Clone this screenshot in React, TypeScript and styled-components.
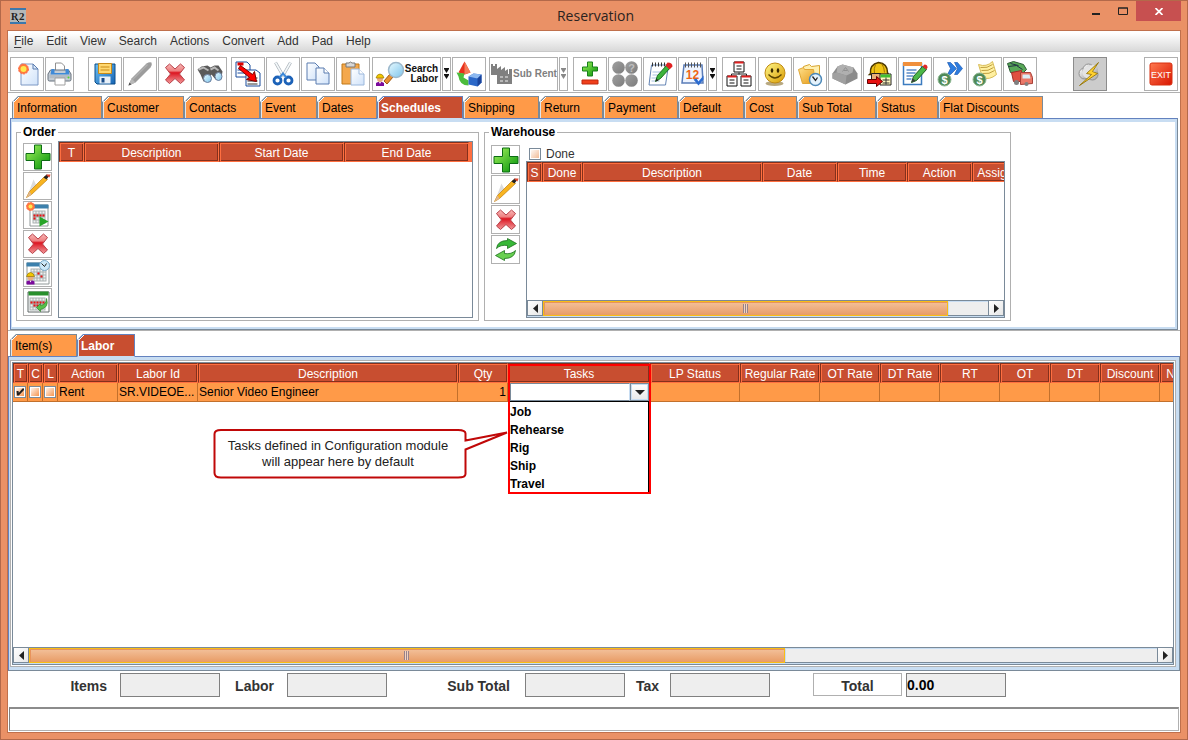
import React from "react";
import styled, { createGlobalStyle, css } from "styled-components";

const c = {
  frame: "#ea9166",
  frameEdge: "#b3694a",
  orange: "#ff9a48",
  brick: "#c84e30",
  brickDark: "#85301c",
  brickLight: "#ff6f40",
  steel: "#7a8a99",
  blue: "#6382bf",
  ice: "#c8ddf2",
  grey: "#b0b0b0",
  field: "#eeeeee",
};

const Global = createGlobalStyle`
  * { box-sizing: border-box; }
  body { margin: 0; background: ${c.frame}; font: 12px/14px "Liberation Sans", Arial, sans-serif; color: #000; }
  button, input, select { font: inherit; color: inherit; margin: 0; padding: 0; border-radius: 0; }
  svg { flex: none; }
`;

/* ---------- window frame ---------- */

const Window = styled.div`
  min-height: 100vh;
  display: flex;
  flex-direction: column;
  border: 1px solid ${c.frameEdge};
  padding: 0 6px 6px;
  background: ${c.frame};
`;
const TitleBar = styled.header`
  height: 29px;
  display: grid;
  grid-template-columns: 1fr auto 1fr;
  align-items: center;
  padding-left: 3px;
`;
const Title = styled.h1`
  margin: 0;
  font: 14px/18px "Open Sans", sans-serif;
  color: #2b2320;
`;
const WindowButtons = styled.div`
  display: flex;
  align-self: start;
  justify-content: flex-end;
`;
const WindowButton = styled.button<{ $close?: boolean }>`
  width: ${(p) => (p.$close ? 45 : 27)}px;
  height: 20px;
  border: 0;
  display: grid;
  place-items: center;
  background: ${(p) => (p.$close ? "#c75050" : "transparent")};
`;
const Client = styled.main`
  flex: 1;
  min-width: 0;
  display: flex;
  flex-direction: column;
  border: 1px solid #c0704c;
  background: #fff;
`;

/* ---------- menu and toolbar ---------- */

const MenuBar = styled.nav`
  height: 21px;
  display: flex;
  align-items: center;
  gap: 13px;
  padding-left: 6px;
  border-bottom: 1px solid #c8c8c8;
  background: linear-gradient(#fff 10%, #d9d9d9);
`;
const MenuItem = styled.button`
  border: 0;
  background: none;
  color: #333;
  u { text-underline-offset: 2px; }
`;
const Toolbar = styled.div`
  display: flex;
  padding: 5px 2px 1px;
  border-bottom: 1px solid ${c.grey};
`;
const ToolGroup = styled.div<{ $before?: number }>`
  display: flex;
  gap: 1px;
  margin-left: ${(p) => p.$before ?? 0}px;
`;
const ToolSpacer = styled.div`
  flex: 1;
`;
const ToolButton = styled.button<{ $w?: number; $h?: number; $pressed?: boolean }>`
  width: ${(p) => p.$w ?? 34}px;
  height: ${(p) => p.$h ?? 34}px;
  flex: none;
  display: flex;
  align-items: center;
  justify-content: center;
  border: 1px solid ${(p) => (p.$pressed ? "#8c8c8c" : c.grey)};
  background: ${(p) => (p.$pressed ? "#cccccc" : "#fff")};
  overflow: hidden;
`;
const ToolText = styled.span<{ $dim?: boolean }>`
  font-weight: bold;
  font-size: 10px;
  line-height: 10px;
  text-align: right;
  white-space: nowrap;
  color: ${(p) => (p.$dim ? "#808080" : "#111")};
`;

/* ---------- tabs and panels ---------- */

const TabRow = styled.div<{ $left: number }>`
  display: flex;
  align-items: flex-start;
  height: 22px;
  padding-left: ${(p) => p.$left}px;
`;
const TabButton = styled.button<{ $w: number; $on?: boolean }>`
  width: ${(p) => p.$w}px;
  height: 22px;
  flex: none;
  position: relative;
  text-align: left;
  padding: 1px 0 0 4px;
  border: 1px solid ${c.steel};
  border-bottom: 0;
  clip-path: polygon(6px 0, 100% 0, 100% 100%, 0 100%, 0 6px);
  background: linear-gradient(135deg, ${c.steel} 5px, #fff 5px 6px, ${c.orange} 6px) border-box;
  box-shadow: inset 1px 0 #dfe6ee;
  ${(p) =>
    p.$on &&
    css`
      height: 23px;
      z-index: 1;
      color: #fff;
      font-weight: bold;
      padding-left: 3px;
      border-color: ${c.blue};
      border-bottom: 1px solid ${c.ice};
      background: linear-gradient(135deg, ${c.blue} 5px, #fff 5px 6px, ${c.brick} 6px) border-box;
    `}
`;
const UpperArea = styled.section`
  padding: 3px 2px 0;
  border-bottom: 1px solid ${c.grey};
`;
const UpperPanel = styled.div`
  display: flex;
  gap: 5px;
  padding: 6px 4px 8px 5px;
  border: 1px solid;
  border-color: ${c.blue} ${c.steel} ${c.steel} ${c.blue};
  box-shadow: inset 1px 3px ${c.ice}, inset -2px -2px ${c.ice};
`;
const LowerArea = styled.section`
  flex: 1;
  min-width: 0;
  display: flex;
  flex-direction: column;
  padding-top: 3px;
`;
const LowerPanel = styled.div`
  flex: 1;
  display: flex;
  padding: 3px 3px 3px 1px;
  border: 1px solid;
  border-color: ${c.blue} ${c.steel} ${c.steel} ${c.blue};
  background: ${c.ice};
`;
const LowerInner = styled.div`
  flex: 1;
  min-width: 0;
  display: flex;
  padding: 1px;
  border: 1px solid ${c.grey};
  background: #fff;
`;
const Group = styled.fieldset<{ $w: number }>`
  width: ${(p) => p.$w}px;
  height: 196px;
  min-width: 0;
  margin: 0;
  padding: 0 5px 2px 6px;
  border: 1px solid ${c.grey};
`;
const Legend = styled.legend`
  margin-left: -2px;
  padding: 0 2px;
  font-weight: bold;
  line-height: 14px;
`;
const GroupBody = styled.div`
  display: flex;
  height: 100%;
  gap: 6px;
`;
const SideTools = styled.div<{ $top: number }>`
  display: flex;
  flex-direction: column;
  gap: 1px;
  padding-top: ${(p) => p.$top}px;
`;
const GroupMain = styled.div<{ $top: number }>`
  flex: 1;
  min-width: 0;
  display: flex;
  flex-direction: column;
  padding-top: ${(p) => p.$top}px;
`;
const CheckLabel = styled.label`
  display: flex;
  align-items: center;
  gap: 5px;
  height: 14px;
  padding-left: 3px;
  color: #333;
`;

/* ---------- tables ---------- */

const TableFrame = styled.div`
  flex: 1;
  min-width: 0;
  display: flex;
  flex-direction: column;
  border: 1px solid ${c.steel};
  background: #fff;
`;
const TableView = styled.div`
  flex: 1;
  overflow: hidden;
  background: linear-gradient(${c.brickLight} 20px, transparent 20px);
`;
const Table = styled.table<{ $w: number }>`
  width: ${(p) => p.$w}px;
  table-layout: fixed;
  border-collapse: separate;
  border-spacing: 0;
`;
const Th = styled.th`
  height: 20px;
  padding: 2px 0 0;
  line-height: 14px;
  overflow: hidden;
  white-space: nowrap;
  font-weight: normal;
  color: #fff;
  background: ${c.brick};
  border: 1px solid;
  border-color: ${c.brickDark} ${c.brickLight} ${c.brickLight} ${c.brickDark};
  box-shadow: inset 1px 1px ${c.brickLight}, inset -1px -1px ${c.brickDark};
`;
const Td = styled.td<{ $right?: boolean }>`
  height: 19px;
  padding: 0 1px;
  white-space: nowrap;
  vertical-align: middle;
  text-align: ${(p) => (p.$right ? "right" : "left")};
  background: ${c.orange};
  border: solid #c2702c;
  border-width: 0 1px 1px 0;
`;
const TaskTd = styled(Td)`
  position: relative;
  padding: 0 0 0 2px;
`;
const Check = styled.input.attrs({ type: "checkbox" })<{ $warm?: boolean }>`
  appearance: none;
  display: block;
  width: 12px;
  height: 12px;
  border: 1px solid ${c.steel};
  box-shadow: inset 1px 1px #fff, inset -1px -1px #fff;
  background: linear-gradient(135deg, #fff, ${(p) => (p.$warm ? "#f58a3c" : "#f0b48c")});
  &:checked::before {
    content: "";
    display: block;
    width: 10px;
    height: 10px;
    background: #222;
    clip-path: polygon(15% 40%, 35% 40%, 38% 58%, 75% 15%, 90% 15%, 90% 30%, 38% 85%, 20% 85%);
  }
`;

/* ---------- task editor ---------- */

const Combo = styled.div`
  display: flex;
  height: 18px;
`;
const ComboSelect = styled.select`
  appearance: none;
  flex: 1;
  min-width: 0;
  height: 18px;
  border: 1px solid ${c.steel};
  border-right-color: ${c.ice};
  background: #fff;
`;
const ComboArrow = styled.span`
  width: 19px;
  height: 18px;
  display: grid;
  place-items: center;
  border: 1px solid ${c.steel};
  box-shadow: inset 0 0 0 1px ${c.ice};
  background: linear-gradient(#fff, #e8e8e8);
`;
const TaskList = styled.ul`
  position: absolute;
  top: 18px;
  left: 2px;
  right: 0;
  height: 92px;
  margin: 0;
  padding: 1px 0 0;
  list-style: none;
  font-weight: bold;
  line-height: 18px;
  background: #fff;
  border: 1px solid #000;
  border-width: 1px 1px 0 0;
`;
const Highlight = styled.div`
  position: absolute;
  top: -19px;
  left: 0;
  right: -2px;
  height: 130px;
  border: 2px solid #f00;
  pointer-events: none;
`;
const Callout = styled.div`
  position: absolute;
  left: -295px;
  top: 45px;
  width: 296px;
  height: 52px;
`;
const CalloutShape = styled.svg`
  position: absolute;
  inset: 0;
  overflow: visible;
`;
const CalloutText = styled.p`
  position: relative;
  width: 250px;
  margin: 0;
  padding-top: 10px;
  font-size: 13px;
  line-height: 16px;
  text-align: center;
  color: #222;
`;

/* ---------- scroll bar ---------- */

const Scroll = styled.div`
  display: flex;
  flex: none;
  height: 17px;
  border-top: 1px solid ${c.steel};
  border-bottom: 1px solid ${c.ice};
  background: ${c.field};
`;
const ScrollEnd = styled.button`
  width: 16px;
  display: grid;
  place-items: center;
  border: 1px solid ${c.steel};
  border-width: 0 1px 1px;
  background: linear-gradient(135deg, #fff, #e6e6e6);
`;
const Thumb = styled.div<{ $grow: number }>`
  flex: ${(p) => p.$grow} 0 0;
  display: grid;
  place-items: center;
  border: 1px solid #f9bd14;
  box-shadow: inset 1px 1px #e8935c;
  background: linear-gradient(#f3c19b, #e89c66);
`;
const Grip = styled.i`
  width: 5px;
  height: 9px;
  background: repeating-linear-gradient(90deg, #98828a 0 1px, #f3d4bf 1px 2px);
`;
const Track = styled.div<{ $grow: number }>`
  flex: ${(p) => p.$grow} 0 0;
  border-bottom: 1px solid ${c.steel};
  box-shadow: inset 1px 1px ${c.ice};
`;

/* ---------- footer ---------- */

const Totals = styled.form`
  height: 36px;
  display: flex;
  align-items: flex-start;
  padding-top: 2px;
  font-weight: bold;
  font-size: 14px;
  line-height: 24px;
  color: #333;
`;
const TotalLabel = styled.label<{ $w: number; $gap: number }>`
  width: ${(p) => p.$w}px;
  padding-top: 1px;
  padding-right: ${(p) => p.$gap}px;
  text-align: right;
  white-space: nowrap;
`;
const TotalField = styled.input`
  width: 100px;
  height: 24px;
  padding: 0;
  color: #000;
  border: 1px solid #808080;
  background: ${c.field};
`;
const TotalButton = styled.button`
  width: 89px;
  height: 23px;
  margin: 0 4px 0 43px;
  border: 1px solid ${c.grey};
  background: #fff;
`;
const StatusBar = styled.footer`
  height: 24px;
  margin: 0 1px 1px;
  border: 1px solid ${c.grey};
  border-top: 2px solid #8c8c8c;
  border-left-color: #808080;
`;

/* ---------- icons ---------- */

const HiddenDefs = styled.svg`
  position: absolute;
  width: 0;
  height: 0;
`;

const Grad = ({ id, a, b }: { id: string; a: string; b: string }) => (
  <linearGradient id={id} x1="0" y1="0" x2="1" y2="1">
    <stop offset="0" stopColor={a} />
    <stop offset="1" stopColor={b} />
  </linearGradient>
);

const Defs = () => (
  <HiddenDefs aria-hidden>
    <defs>
      <Grad id="paper" a="#ffffff" b="#cfe2fa" />
      <Grad id="green" a="#a4f45c" b="#009008" />
      <linearGradient id="red" x1="0" y1="0" x2="0" y2="1">
        <stop offset="0" stopColor="#f8b8b8" />
        <stop offset=".35" stopColor="#ee8080" />
        <stop offset=".45" stopColor="#dc1420" />
        <stop offset=".65" stopColor="#e44850" />
        <stop offset="1" stopColor="#f29a9a" />
      </linearGradient>
      <Grad id="blueg" a="#6cc0f4" b="#1664b4" />
      <Grad id="gold" a="#ffe08a" b="#e69a18" />
      <Grad id="silver" a="#ffffff" b="#a0a0a0" />
      <Grad id="smile" a="#fff88a" b="#d89a00" />
      <Grad id="exit" a="#ff7a50" b="#d81400" />
      <Grad id="glass" a="#e8faff" b="#7cc4ec" />
      <Grad id="ball" a="#a0a0a0" b="#7c7c7c" />
    </defs>
  </HiddenDefs>
);

const Sun = ({ x, y, r = 4 }: { x: number; y: number; r?: number }) => (
  <g>
    <circle cx={x} cy={y} r={r} fill="#ff7a3c" stroke="#ff6a4c" strokeDasharray="2 1" />
    <circle cx={x} cy={y} r={r - 2} fill="#ffe850" />
  </g>
);
const Worker = ({ x, y }: { x: number; y: number }) => (
  <g transform={`translate(${x} ${y})`}>
    <path d="M0 12V9q4-3 8 0v3z" fill="#7a0a9c" />
    <path d="M3 8l1 2 1-2z" fill="#fff" />
    <circle cx="4" cy="5" r="3" fill="#e8b080" />
    <path d="M0 4Q1 0 4 0t4 4z" fill="#f2c800" stroke="#8a6a00" strokeWidth=".6" />
  </g>
);
const Dots = ({ x, y, cols, rows, hot }: { x: number; y: number; cols: number; rows: number; hot: number[] }) => (
  <g>
    <path d={`M${x - 1} ${y - 1}h${cols * 3 + 1}v${rows * 3 + 1}h-${cols * 3 + 1}z`} fill="#a8b0b0" />
    {Array.from({ length: cols * rows }, (_, i) => (
      <rect
        key={i}
        x={x + (i % cols) * 3}
        y={y + Math.floor(i / cols) * 3}
        width="2"
        height="2"
        fill={hot.includes(i) ? "#f01010" : "#eef0f0"}
      />
    ))}
  </g>
);
const Coin = ({ x, y }: { x: number; y: number }) => (
  <g>
    <circle cx={x} cy={y} r="6.5" fill="#4f8a58" stroke="#8fb894" />
    <text x={x} y={y + 4} fontSize="11" fontWeight="bold" fill="#fff" textAnchor="middle" fontFamily="Liberation Sans">
      $
    </text>
  </g>
);

const art: Record<string, React.ReactNode> = {
  newDoc: (
    <>
      <path d="M6.500 2.500h12l5 5v16h-17z" fill="url(#paper)" stroke="#7c98c4" />
      <path d="M18.500 2.500v5h5z" fill="#dceafa" stroke="#5a7cb0" />
      <Sun x={9} y={7.5} r={5} />
    </>
  ),
  print: (
    <>
      <path d="M8 10V1.500h6l3 3V10z" fill="#fff" stroke="#909090" />
      <path d="M3 8.500h18l2.500 4V18q0 1.500-1.500 1.500H2Q.5 19.500.5 18v-5.500z" fill="#c4ccd4" stroke="#66707c" />
      <path d="M4 7.500h3v4h11v-4h3l1 5.500H3z" fill="#3f8ad8" />
      <path d="M2 13.500h20v3H2z" fill="#b4bcc4" />
      <circle cx="21" cy="16" r="1" fill="#50d830" />
      <path d="M7.500 16.500h10v7h-10z" fill="#fff" stroke="#a0a0a0" />
    </>
  ),
  save: (
    <>
      <path d="M2.500 2.500h20v20h-18l-2-2z" fill="url(#blueg)" stroke="#0a4c88" />
      <path d="M6 2h13v10H6z" fill="#ffd870" stroke="#c88a18" />
      <path d="M8 5.500h9M8 8.500h9" stroke="#c88a18" />
      <path d="M7 15h11v7H7z" fill="#e8f0f8" />
      <path d="M9 16.500h3v4.500H9z" fill="#1a4c88" />
    </>
  ),
  penGrey: (
    <>
      <path d="M1 24l3-7L19 2q3-2 5-1 1 2-1 5L8 21z" fill="#9c9c9c" />
      <path d="M1 24l3-7 4 4z" fill="#b8b8b8" />
      <path d="M1 24l1-3 2 2z" fill="#505050" />
      <path d="M5 18L20 3" stroke="#b0b0b0" strokeWidth="1.500" />
    </>
  ),
  cross: (
    <path
      d="M3 6l4-3.500 5.500 5 5.500-5L22 6l-5 6.500 5 6-4 3.500-5.500-5L7 22l-4-3.500 5-6z"
      fill="url(#red)"
      stroke="#b84048"
      strokeLinejoin="round"
    />
  ),
  binoculars: (
    <>
      <path d="M0 8l4-3 6-1 3 2 4-2h4l4 6-1 6-6 2-4-5-3 6-5 1-3-7z" fill="#5a5a5a" />
      <path d="M1 8l5-2 5 3M13 8l4-2 4 3" stroke="#b8b8b8" strokeWidth="2" fill="none" />
      <ellipse cx="10" cy="17" rx="4" ry="4" fill="url(#glass)" stroke="#6a7c9c" />
      <ellipse cx="21" cy="15" rx="3.500" ry="4" fill="url(#glass)" stroke="#6a7c9c" />
    </>
  ),
  convert: (
    <>
      <path d="M.5.500h11l3 3v12H.500z" fill="#fff" stroke="#1a4c9c" />
      <path d="M2 1h6v3H2z" fill="#e00000" />
      <path d="M2 8.500h8M2 11.500h8" stroke="#1a4c9c" />
      <path d="M10.500 8.500h10l4 3v13h-14z" fill="#fff" stroke="#1a4c9c" />
      <path d="M12 16.500h10M12 19.500h10M12 22.500h10" stroke="#333" />
      <path d="M5 4l12 9 2-3 2 10-10-2 3-2L3 7z" fill="#f00" stroke="#700" />
    </>
  ),
  cut: (
    <>
      <path d="M5 1l8 14M20 1l-8 14" stroke="#a8b0b8" strokeWidth="3" />
      <path d="M5 1l8 14M20 1l-8 14" stroke="#f4f8fa" strokeWidth="1.600" />
      <circle cx="7" cy="19" r="3.500" fill="none" stroke="#1c62b8" strokeWidth="2.800" />
      <circle cx="18" cy="19" r="3.500" fill="none" stroke="#1c62b8" strokeWidth="2.800" />
      <path d="M9 16l3.500-4 3.500 4" fill="none" stroke="#3c88d8" strokeWidth="2" />
    </>
  ),
  copy: (
    <>
      <path d="M1.500 1.500h8l4 4v13h-12z" fill="url(#paper)" stroke="#5a7cb0" />
      <path d="M10.500 6.500h8l5 5v11h-13z" fill="url(#paper)" stroke="#5a7cb0" />
      <path d="M18.500 6.500v5h5" fill="#fff" stroke="#5a7cb0" />
    </>
  ),
  paste: (
    <>
      <path d="M1.500 2.500h17v20h-17z" fill="#f4a84c" stroke="#c07818" />
      <path d="M5.500 1.500h3l1.500-1 1.500 1h3v4h-9z" fill="#d8d8d8" stroke="#787878" />
      <path d="M10.500 7.500h8l5 5v11h-13z" fill="url(#paper)" stroke="#9cb8dc" />
      <path d="M18.500 7.500v5h5" fill="#fff" stroke="#9cb8dc" />
    </>
  ),
  searchLabor: (
    <>
      <path d="M9 20l6-7 3 3-6 7z" fill="#e89030" stroke="#a05a10" />
      <circle cx="21" cy="9" r="7.500" fill="url(#glass)" stroke="#9cb8cc" strokeWidth="1.500" />
      <Worker x={1} y={13} />
    </>
  ),
  shapes: (
    <>
      <path d="M8 0L2 11l6 2 6-2z" fill="#e8301c" />
      <path d="M8 0v13l6-2z" fill="#f47a58" />
      <path d="M0 11l8 1-1 4 5 3v5q-9 0-10-9z" fill="#4cbc3c" />
      <path d="M12 15l5-3 8 1v8l-4 4-9-2z" fill="#2c68c8" />
      <path d="M12 15l5-3 8 1-4 4z" fill="#8cb8f0" />
      <path d="M21 17l4-4v8l-4 4z" fill="#1a449c" />
    </>
  ),
  factory: (
    <>
      <path d="M1 14V3h2v2h2V3h2v5l4-3v4l4-3v4l3-2v5h1V8h3v15H7v-9z" fill="#808080" />
      <path d="M10 15h3v2h-3zM15 15h3v2h-3zM10 19h3v2h-3zM15 19h3v2h-3z" fill="#b8b8b8" />
    </>
  ),
  plusMinus: (
    <>
      <path d="M10 .500h5v5h5v4h-5v5h-5v-5H5v-4h5z" fill="url(#green)" stroke="#18801c" />
      <path d="M4.500 18.500h16v4h-16z" fill="#f0401c" stroke="#c02810" />
    </>
  ),
  circles: (
    <>
      {[6, 19].map((x) =>
        [6, 19].map((y) => <circle key={`${x}-${y}`} cx={x} cy={y} r="6.300" fill="url(#ball)" />)
      )}
      <text x="19" y="10" fontSize="11" fontWeight="bold" fill="#bdbdbd" textAnchor="middle">
        ?
      </text>
    </>
  ),
  note: (
    <>
      <path d="M4 3.500h17l-3 20H1.500z" fill="#fff" stroke="#6484b4" />
      <path d="M5 1v4M8 1v4M11 1v4M14 1v4M17 1v4" stroke="#333" />
      <path d="M5 10.500h10M5 13.500h9M4 16.500h8M4 19.500h8" stroke="#a8c0e0" />
      <path d="M8 20l2-6 9-10 3 3-9 10z" fill="#3cb43c" stroke="#1a701c" />
      <path d="M18 4l2-3q5 0 5 4l-3 3z" fill="#e02020" />
      <path d="M8 20l1-3 2 2z" fill="#222" />
    </>
  ),
  calendar: (
    <>
      <path d="M3.500 3.500h18l1 18h-21z" fill="#eef4ff" stroke="#5a7cb8" strokeWidth="1.500" />
      <path d="M5 1v5M8 1v5M11 1v5M14 1v5M17 1v5M20 1v5" stroke="#555" />
      <text x="12" y="17" fontSize="12" fontWeight="bold" fill="#f06414" textAnchor="middle" fontFamily="Liberation Sans">
        12
      </text>
      <path d="M13 18l3-1 2 3 5-6v4l-5 6z" fill="#2c6cd0" />
    </>
  ),
  org: (
    <>
      <path d="M12.500 11v2M5 15v-2.500h15V15" stroke="#222" fill="none" />
      {[
        [8, 0],
        [1, 14],
        [15, 14],
      ].map(([x, y]) => (
        <g key={`${x}${y}`}>
          <path d={`M${x - 0.5} ${y + 0.5}h10v10h-10z`} fill="#fff" stroke="#111" />
          <path d={`M${x} ${y}h9v2h-9z`} fill="#e02020" />
          <path d={`M${x + 2} ${y + 4.5}h5M${x + 2} ${y + 7.5}h5`} stroke="#111" />
        </g>
      ))}
    </>
  ),
  smile: (
    <>
      <ellipse cx="12" cy="22" rx="9" ry="2.500" fill="#b8a880" />
      <circle cx="12.500" cy="11.500" r="10" fill="url(#smile)" stroke="#c08a10" />
      <ellipse cx="9.500" cy="9" rx="1.300" ry="2.300" fill="#3c2c00" />
      <ellipse cx="15.500" cy="9" rx="1.300" ry="2.300" fill="#3c2c00" />
      <path d="M6 13q6.500 7 13 0" fill="none" stroke="#5c4400" strokeWidth="1.300" />
    </>
  ),
  folderClock: (
    <>
      <path d="M6 5l6-2 2 2 8-1v15H6z" fill="#fff0b0" stroke="#d8a430" />
      <path d="M1 8l5-2 1 2h9l2 14H5z" fill="url(#gold)" stroke="#e0a838" />
      <circle cx="18" cy="18" r="6" fill="#e4f2fc" stroke="#4c88b8" strokeWidth="1.500" />
      <path d="M15 15l3 4 2-3" fill="none" stroke="#222" strokeWidth="1.300" />
    </>
  ),
  keycap: (
    <>
      <path d="M0 12L5 5l5-2 11 3 4 6v5l-12 6L0 17z" fill="#8c8c8c" />
      <path d="M5 5l5-2 11 3-1 5-6 3-10-3z" fill="#b0b0b0" />
      <path d="M0 12l4-1 10 3-1 9L0 17z" fill="#a0a0a0" />
      <path d="M10 10l3-4 3 4M11.500 9h3" stroke="#909090" fill="none" />
    </>
  ),
  labor: (
    <>
      <path d="M3 12Q2 3 11 1q9 1 9 10l1 2H2z" fill="#f0c414" stroke="#4c3800" strokeWidth="1.500" />
      <path d="M8 3q-2 4-1 9M14 2q3 4 3 9" stroke="#a07800" fill="none" />
      <path d="M4 12h9v7H4z" fill="#e8b078" stroke="#222" />
      <path d="M12.500 12.500h11v11h-11z" fill="#fff8c0" stroke="#222" />
      <path d="M13 13h10v3H13z" fill="#40c030" />
      <path d="M15 18.500h7M15 21.500h7M18.500 16v7" stroke="#333" />
      <path d="M0 18h9v-3l6 5-6 5v-3H0z" fill="#e81010" stroke="#600" />
    </>
  ),
  edit: (
    <>
      <path d="M1 2h18v21H1z" fill="#fff" stroke="#3c7cc0" strokeWidth="1.500" />
      <path d="M.5.500h19v4H.500z" fill="#f0903c" />
      <path d="M4 8.500h10M4 11.500h9M4 14.500h7M4 17.500h5" stroke="#5c8cc8" strokeWidth="1.300" />
      <path d="M9 21l2-6L20 5l4 3-10 11z" fill="#4cb848" stroke="#205c20" />
      <path d="M20 5l2-2q3 0 3 3l-1 2z" fill="#e02828" />
      <path d="M9 21l1-4 3 2z" fill="#3c3c3c" />
    </>
  ),
  coinNext: (
    <>
      <path d="M10 1h3l6 6-6 6h-3l3-6zM17 1h3l5 6-5 6h-3l3-6z" fill="#2c7ce0" stroke="#1450a8" strokeWidth=".6" />
      <Coin x={7} y={18} />
    </>
  ),
  coinNote: (
    <>
      <path d="M6 3q8 3 14-3l4 13q-7 6-14 3z" fill="#fff0a0" stroke="#d8bc58" />
      <path d="M8 6q7 1 12-3M9 9q7 1 12-3M10 12q7 1 12-3" stroke="#c0a040" fill="none" />
      <Coin x={7} y={18} />
    </>
  ),
  truck: (
    <>
      <path d="M0 2l6-2 10 3 3 5-3 3H3z" fill="#58a858" stroke="#2c5c34" />
      <path d="M1 5l8-1 6 4M3 2l8 2" stroke="#234" fill="none" />
      <path d="M4 11l10-2v11L6 20z" fill="#e05040" stroke="#a03028" />
      <path d="M13 11h10l2 5v6l-12 1z" fill="#ea7868" stroke="#a84038" />
      <path d="M15 13h7l1 4h-8z" fill="#dcecf4" />
      <circle cx="9" cy="21" r="2.500" fill="#808080" />
      <circle cx="19" cy="22.500" r="2" fill="#808080" />
    </>
  ),
  storm: (
    <>
      <circle cx="7" cy="12" r="5.500" fill="url(#silver)" stroke="#909090" />
      <circle cx="15" cy="13" r="5.500" fill="url(#silver)" stroke="#909090" />
      <circle cx="11" cy="8" r="5.500" fill="url(#silver)" stroke="#909090" />
      <circle cx="16" cy="8" r="4.500" fill="url(#silver)" />
      <circle cx="11" cy="11" r="6" fill="#e4e4e4" />
      <path d="M21 1L9 12l5 1L2 24l18-12-5-2z" fill="#ffd030" stroke="#8a6c00" strokeWidth=".8" />
    </>
  ),
  exit: (
    <>
      <rect x="1.500" y="1.500" width="22" height="22" rx="2" fill="url(#exit)" stroke="#d83010" />
      <text x="12.500" y="16" fontSize="9" fill="#fff" textAnchor="middle" fontFamily="Liberation Sans">
        EXIT
      </text>
    </>
  ),
  plus: <path d="M9 .500h7v8.500h8.500v7H16v8.500H9V16H.500V9H9z" fill="url(#green)" stroke="#0c6c14" />,
  pencil: (
    <>
      <path d="M2 22L8 6l3 6z" fill="#dcdcdc" />
      <path d="M1 24l3-6L19 3l3 3L6 21z" fill="#f8b420" stroke="#c08010" strokeWidth=".7" />
      <path d="M1 24l3-6 2 3z" fill="#e0b890" />
      <path d="M18 4l3-3 3 1-3 4z" fill="#222" />
      <path d="M21 1l4 0-1 3-3-2z" fill="#e04830" />
    </>
  ),
  calNew: (
    <>
      <path d="M4.500 2.500h18v21h-18z" fill="#fff" stroke="#909898" />
      <path d="M5 2h18v4H5z" fill="#3c80ac" />
      <Dots x={8} y={9} cols={4} rows={4} hot={[4, 5, 6, 7, 8]} />
      <path d="M14 14l9 5-9 5z" fill="#28a428" />
      <Sun x={5} y={4} r={4} />
    </>
  ),
  calLabor: (
    <>
      <path d="M1.500 2.500h22v21h-22z" fill="#fff" stroke="#909898" />
      <path d="M1 2h18v4H1z" fill="#3c80ac" />
      <Dots x={6} y={9} cols={5} rows={4} hot={[7, 13]} />
      <circle cx="19" cy="5" r="5" fill="#cce8f8" stroke="#78a8c8" />
      <path d="M16 3l3 3 2-3" stroke="#222" fill="none" />
      <Worker x={1} y={12} />
    </>
  ),
  calBack: (
    <>
      <path d="M2.500 2.500h21v20h-21z" fill="#fff" stroke="#606868" />
      <path d="M3 2h20v4H3z" fill="#28902c" />
      <Dots x={5} y={9} cols={5} rows={4} hot={[5, 6, 7, 8, 9, 11, 12]} />
      <path d="M21 9q3 9-6 11v2l-4-4 4-4v2q6-1 6-7z" fill="#58c048" stroke="#2c8028" strokeWidth=".7" />
    </>
  ),
  refresh: (
    <>
      <path d="M3 11q1-8 11-8V1l9 5-9 5V8Q7 7 3 11z" fill="#38b838" stroke="#1a701c" strokeWidth=".8" />
      <path d="M22 13q-1 8-11 8v2l-9-5 9-5v3q7 1 11-3z" fill="#68d050" stroke="#1a701c" strokeWidth=".8" />
    </>
  ),
};

const Icon = ({ name, w = 26, box = "-.5 -.5 26 26" }: { name: string; w?: number; box?: string }) => (
  <svg width={w} height="26" viewBox={box} aria-hidden>
    {art[name]}
  </svg>
);
const DoubleArrow = ({ dim }: { dim?: boolean }) => (
  <svg width="7" height="12" viewBox="0 0 7 12" aria-hidden>
    <path d="M1 0h5v1L3.500 5 1 1zM1 6h5v1l-2.500 4L1 7z" fill={dim ? "#888" : "#111"} />
  </svg>
);
const SmallArrow = ({ right }: { right?: boolean }) => (
  <svg width="5" height="9" viewBox="0 0 5 9" aria-hidden>
    <path d={right ? "M0 0l5 4.500L0 9z" : "M5 0L0 4.500 5 9z"} fill="#222" />
  </svg>
);

/* ---------- composed parts ---------- */

const Tool = ({ name, label, ...rest }: { name: string; label: string; $w?: number; $h?: number; $pressed?: boolean }) => (
  <ToolButton aria-label={label} {...rest}>
    <Icon name={name} />
  </ToolButton>
);
const Drop = ({ label, dim }: { label: string; dim?: boolean }) => (
  <ToolButton aria-label={label} $w={9}>
    <DoubleArrow dim={dim} />
  </ToolButton>
);

type Tab = [label: string, width: number];
const Tabs = ({ items, active, left }: { items: Tab[]; active: string; left: number }) => (
  <TabRow role="tablist" $left={left}>
    {items.map(([label, w]) => (
      <TabButton key={label} role="tab" aria-selected={label === active} $w={w} $on={label === active}>
        {label}
      </TabButton>
    ))}
  </TabRow>
);

const HorizontalScroll = ({ thumb, rest }: { thumb: number; rest: number }) => (
  <Scroll>
    <ScrollEnd aria-label="Scroll left">
      <SmallArrow />
    </ScrollEnd>
    <Thumb $grow={thumb}>
      <Grip />
    </Thumb>
    <Track $grow={rest} />
    <ScrollEnd aria-label="Scroll right">
      <SmallArrow right />
    </ScrollEnd>
  </Scroll>
);

type Column = [label: string, width: number];
const Grid = ({ columns, children }: { columns: Column[]; children?: React.ReactNode }) => (
  <Table $w={columns.reduce((sum, col) => sum + col[1], 0)}>
    <colgroup>
      {columns.map(([label, w]) => (
        <col key={label} width={w} />
      ))}
    </colgroup>
    <thead>
      <tr>
        {columns.map(([label]) => (
          <Th key={label} scope="col">
            {label}
          </Th>
        ))}
      </tr>
    </thead>
    {children && <tbody>{children}</tbody>}
  </Table>
);

const menus = ["Edit", "View", "Search", "Actions", "Convert", "Add", "Pad", "Help"];
const mainTabs: Tab[] = [
  ["Information", 90], ["Customer", 82], ["Contacts", 76], ["Event", 57], ["Dates", 60], ["Schedules", 86],
  ["Shipping", 76], ["Return", 64], ["Payment", 75], ["Default", 66], ["Cost", 53], ["Sub Total", 79],
  ["Status", 62], ["Flat Discounts", 105],
];
const orderColumns: Column[] = [["T", 25], ["Description", 135], ["Start Date", 125], ["End Date", 125]];
const warehouseColumns: Column[] = [
  ["S", 15], ["Done", 40], ["Description", 180], ["Date", 75], ["Time", 70], ["Action", 65], ["Assigned", 60],
];
const laborColumns: Column[] = [
  ["T", 15], ["C", 15], ["L", 15], ["Action", 60], ["Labor Id", 80], ["Description", 260], ["Qty", 50],
  ["Tasks", 142], ["LP Status", 90], ["Regular Rate", 80], ["OT Rate", 60], ["DT Rate", 60], ["RT", 60],
  ["OT", 50], ["DT", 50], ["Discount", 60], ["Note", 38],
];
const tasks = ["Job", "Rehearse", "Rig", "Ship", "Travel"];

export default function App() {
  return (
    <Window>
      <Global />
      <Defs />
      <TitleBar>
        <svg width="16" height="16" viewBox="0 0 16 16" aria-hidden>
          <path d="M0 0h16v16H0z" fill="#b4b8b8" />
          <path d="M0 0h16v2H0zM0 14h16v2H0z" fill="#3c78ac" />
          <text x="1" y="12" fontSize="10" fontFamily="Liberation Serif" fontWeight="bold" fill="#222">
            R
          </text>
          <text x="9" y="12" fontSize="11" fontFamily="Liberation Serif" fontWeight="bold" fill="#222">
            2
          </text>
          <path d="M6 11l3 3" stroke="#222" />
        </svg>
        <Title>Reservation</Title>
        <WindowButtons>
          <WindowButton aria-label="Minimize">
            <svg width="8" height="10"><path d="M0 7h8v2H0z" fill="#222" /></svg>
          </WindowButton>
          <WindowButton aria-label="Maximize">
            <svg width="10" height="8"><path d="M.5 1h9v6.500h-9zM0 1h10" fill="none" stroke="#222" /></svg>
          </WindowButton>
          <WindowButton aria-label="Close" $close>
            <svg width="8" height="7"><path d="M.5 0l7 7M7.500 0l-7 7" stroke="#fff" strokeWidth="1.700" /></svg>
          </WindowButton>
        </WindowButtons>
      </TitleBar>

      <Client>
        <MenuBar>
          <MenuItem><u>F</u>ile</MenuItem>
          {menus.map((m) => <MenuItem key={m}>{m}</MenuItem>)}
        </MenuBar>

        <Toolbar role="toolbar">
          <ToolGroup>
            <Tool name="newDoc" label="New" />
            <Tool name="print" label="Print" $w={29} />
          </ToolGroup>
          <ToolGroup $before={14}>
            <Tool name="save" label="Save" />
            <Tool name="penGrey" label="Edit" />
            <Tool name="cross" label="Delete" />
            <Tool name="binoculars" label="Find" />
          </ToolGroup>
          <ToolGroup $before={4}>
            <Tool name="convert" label="Convert" />
            <Tool name="cut" label="Cut" />
            <Tool name="copy" label="Copy" />
            <Tool name="paste" label="Paste" />
          </ToolGroup>
          <ToolGroup $before={2}>
            <ToolButton $w={69}>
              <Icon name="searchLabor" w={30} box="0 0 30 26" />
              <ToolText>Search<br />Labor</ToolText>
            </ToolButton>
            <Drop label="Search labor options" />
            <Tool name="shapes" label="Shapes" />
          </ToolGroup>
          <ToolGroup $before={3}>
            <ToolButton $w={69}>
              <Icon name="factory" w={23} box="0 0 23 26" />
              <ToolText $dim>Sub Rent</ToolText>
            </ToolButton>
            <Drop label="Sub rent options" dim />
          </ToolGroup>
          <ToolGroup $before={5}>
            <Tool name="plusMinus" label="Adjust" />
            <Tool name="circles" label="Availability" />
            <Tool name="note" label="Notes" />
            <Tool name="calendar" label="Calendar" $w={29} />
            <Drop label="Calendar options" />
          </ToolGroup>
          <ToolGroup $before={5}>
            <Tool name="org" label="Hierarchy" />
          </ToolGroup>
          <ToolGroup $before={2}>
            <Tool name="smile" label="Contacts" />
            <Tool name="folderClock" label="History" />
            <Tool name="keycap" label="Key" />
            <Tool name="labor" label="Labor" />
            <Tool name="edit" label="Edit document" />
            <Tool name="coinNext" label="Billing" />
            <Tool name="coinNote" label="Invoice" />
            <Tool name="truck" label="Transport" />
          </ToolGroup>
          <ToolGroup $before={36}>
            <Tool name="storm" label="Quick action" $pressed />
          </ToolGroup>
          <ToolSpacer />
          <Tool name="exit" label="Exit" />
        </Toolbar>

        <UpperArea>
          <Tabs items={mainTabs} active="Schedules" left={2} />
          <UpperPanel>
            <Group $w={463}>
              <Legend>Order</Legend>
              <GroupBody>
                <SideTools $top={4}>
                  <Tool name="plus" label="Add" $w={29} $h={28} />
                  <Tool name="pencil" label="Edit" $w={29} $h={28} />
                  <Tool name="calNew" label="New schedule" $w={29} $h={28} />
                  <Tool name="cross" label="Delete" $w={29} $h={28} />
                  <Tool name="calLabor" label="Labor schedule" $w={29} $h={28} />
                  <Tool name="calBack" label="Restore schedule" $w={29} $h={28} />
                </SideTools>
                <GroupMain $top={2}>
                  <TableFrame>
                    <TableView><Grid columns={orderColumns} /></TableView>
                  </TableFrame>
                </GroupMain>
              </GroupBody>
            </Group>
            <Group $w={527}>
              <Legend>Warehouse</Legend>
              <GroupBody>
                <SideTools $top={6}>
                  <Tool name="plus" label="Add" $w={29} $h={29} />
                  <Tool name="pencil" label="Edit" $w={29} $h={29} />
                  <Tool name="cross" label="Delete" $w={29} $h={29} />
                  <Tool name="refresh" label="Refresh" $w={29} $h={29} />
                </SideTools>
                <GroupMain $top={8}>
                  <CheckLabel><Check />Done</CheckLabel>
                  <TableFrame>
                    <TableView><Grid columns={warehouseColumns} /></TableView>
                    <HorizontalScroll thumb={405} rest={40} />
                  </TableFrame>
                </GroupMain>
              </GroupBody>
            </Group>
          </UpperPanel>
        </UpperArea>

        <LowerArea>
          <Tabs items={[["Item(s)", 67], ["Labor", 58]]} active="Labor" left={2} />
          <LowerPanel>
            <LowerInner>
              <TableFrame>
                <TableView>
                  <Grid columns={laborColumns}>
                    <tr>
                      <Td><Check $warm defaultChecked aria-label="T" /></Td>
                      <Td><Check $warm aria-label="C" /></Td>
                      <Td><Check $warm aria-label="L" /></Td>
                      <Td>Rent</Td>
                      <Td>SR.VIDEOE...</Td>
                      <Td>Senior Video Engineer</Td>
                      <Td $right>1</Td>
                      <TaskTd>
                        <Combo>
                          <ComboSelect aria-label="Task" defaultValue="">
                            <option value="" />
                            {tasks.map((t) => <option key={t}>{t}</option>)}
                          </ComboSelect>
                          <ComboArrow>
                            <svg width="10" height="5"><path d="M0 0h10L5 5z" fill="#222" /></svg>
                          </ComboArrow>
                        </Combo>
                        <TaskList>
                          {tasks.map((t) => <li key={t}>{t}</li>)}
                        </TaskList>
                        <Highlight />
                        <Callout>
                          <CalloutShape width="296" height="52" viewBox="0 0 296 52" aria-hidden>
                            <path
                              d="M8 2H245Q252.500 2 252.500 5.500V12.500L294 4.500 252.500 21.500V46Q252.500 49.500 245 49.500H8Q1.500 49.500 1.500 45V6Q1.500 2 8 2z"
                              fill="#fff"
                              stroke="#c00808"
                              strokeWidth="2"
                            />
                          </CalloutShape>
                          <CalloutText>
                            Tasks defined in Configuration module
                            <br />
                            will appear here by default
                          </CalloutText>
                        </Callout>
                      </TaskTd>
                      {laborColumns.slice(8).map(([label]) => <Td key={label} />)}
                    </tr>
                  </Grid>
                </TableView>
                <HorizontalScroll thumb={755} rest={373} />
              </TableFrame>
            </LowerInner>
          </LowerPanel>
        </LowerArea>

        <Totals>
          <TotalLabel htmlFor="items" $w={112} $gap={13}>Items</TotalLabel>
          <TotalField id="items" readOnly />
          <TotalLabel htmlFor="labor" $w={67} $gap={13}>Labor</TotalLabel>
          <TotalField id="labor" readOnly />
          <TotalLabel htmlFor="sub" $w={138} $gap={15}>Sub Total</TotalLabel>
          <TotalField id="sub" readOnly />
          <TotalLabel htmlFor="tax" $w={45} $gap={11}>Tax</TotalLabel>
          <TotalField id="tax" readOnly />
          <TotalButton type="button">Total</TotalButton>
          <TotalField aria-label="Total amount" readOnly defaultValue="0.00" />
        </Totals>
        <StatusBar />
      </Client>
    </Window>
  );
}
